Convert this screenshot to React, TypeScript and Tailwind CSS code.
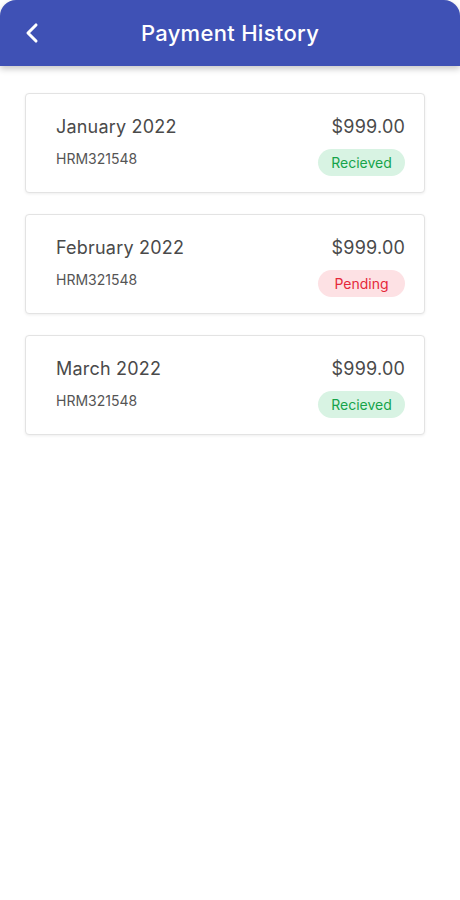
import { ChevronLeft } from "lucide-react";

type Payment = {
  month: string;
  amount: string;
  ref: string;
  status: "Recieved" | "Pending";
};

const payments: Payment[] = [
  { month: "January 2022", amount: "$999.00", ref: "HRM321548", status: "Recieved" },
  { month: "February 2022", amount: "$999.00", ref: "HRM321548", status: "Pending" },
  { month: "March 2022", amount: "$999.00", ref: "HRM321548", status: "Recieved" },
];

function StatusBadge({ status }: { status: Payment["status"] }) {
  if (status === "Pending") {
    return (
      <span className="inline-flex h-[27px] w-[87px] items-center justify-center rounded-full bg-[#fde1e4] text-[14px] leading-none text-[#e5283a]">
        Pending
      </span>
    );
  }
  return (
    <span className="inline-flex h-[27px] w-[87px] items-center justify-center rounded-full bg-[#d8f3e3] text-[14px] leading-none text-[#16a34a]">
      Recieved
    </span>
  );
}

export default function App() {
  return (
    <div className="min-h-[900px] w-full bg-white font-['Inter',sans-serif]">
      {/* Header */}
      <header className="relative flex h-[66px] items-center justify-center rounded-t-[16px] bg-[#3f51b5] shadow-[0_3px_6px_rgba(0,0,0,0.22)]">
        <button className="absolute left-[16px] top-[17px] text-white">
          <ChevronLeft size={32} strokeWidth={2.3} />
        </button>
        <h1 className="text-[22px] font-medium tracking-[0.3px] text-white">Payment History</h1>
      </header>

      {/* List */}
      <div className="flex w-[400px] flex-col gap-[21px] ml-[25px] pt-[27px]">
        {payments.map((p) => (
          <div
            key={p.month}
            className="h-[100px] rounded-[4px] border border-[#e3e3e3] bg-white pl-[30px] pr-[19px] pt-[19px] shadow-[0_1px_3px_rgba(0,0,0,0.07)]"
          >
            <div className="flex items-center justify-between leading-[27px]">
              <span className="text-[18px] tracking-[0.2px] text-[#4a4a4a]">{p.month}</span>
              <span className="text-[18px] tracking-[0.2px] text-[#4a4a4a]">{p.amount}</span>
            </div>
            <div className="mt-[9px] flex items-start justify-between">
              <span className="text-[14px] leading-[20px] text-[#555555]">{p.ref}</span>
              <StatusBadge status={p.status} />
            </div>
          </div>
        ))}
      </div>
    </div>
  );
}
